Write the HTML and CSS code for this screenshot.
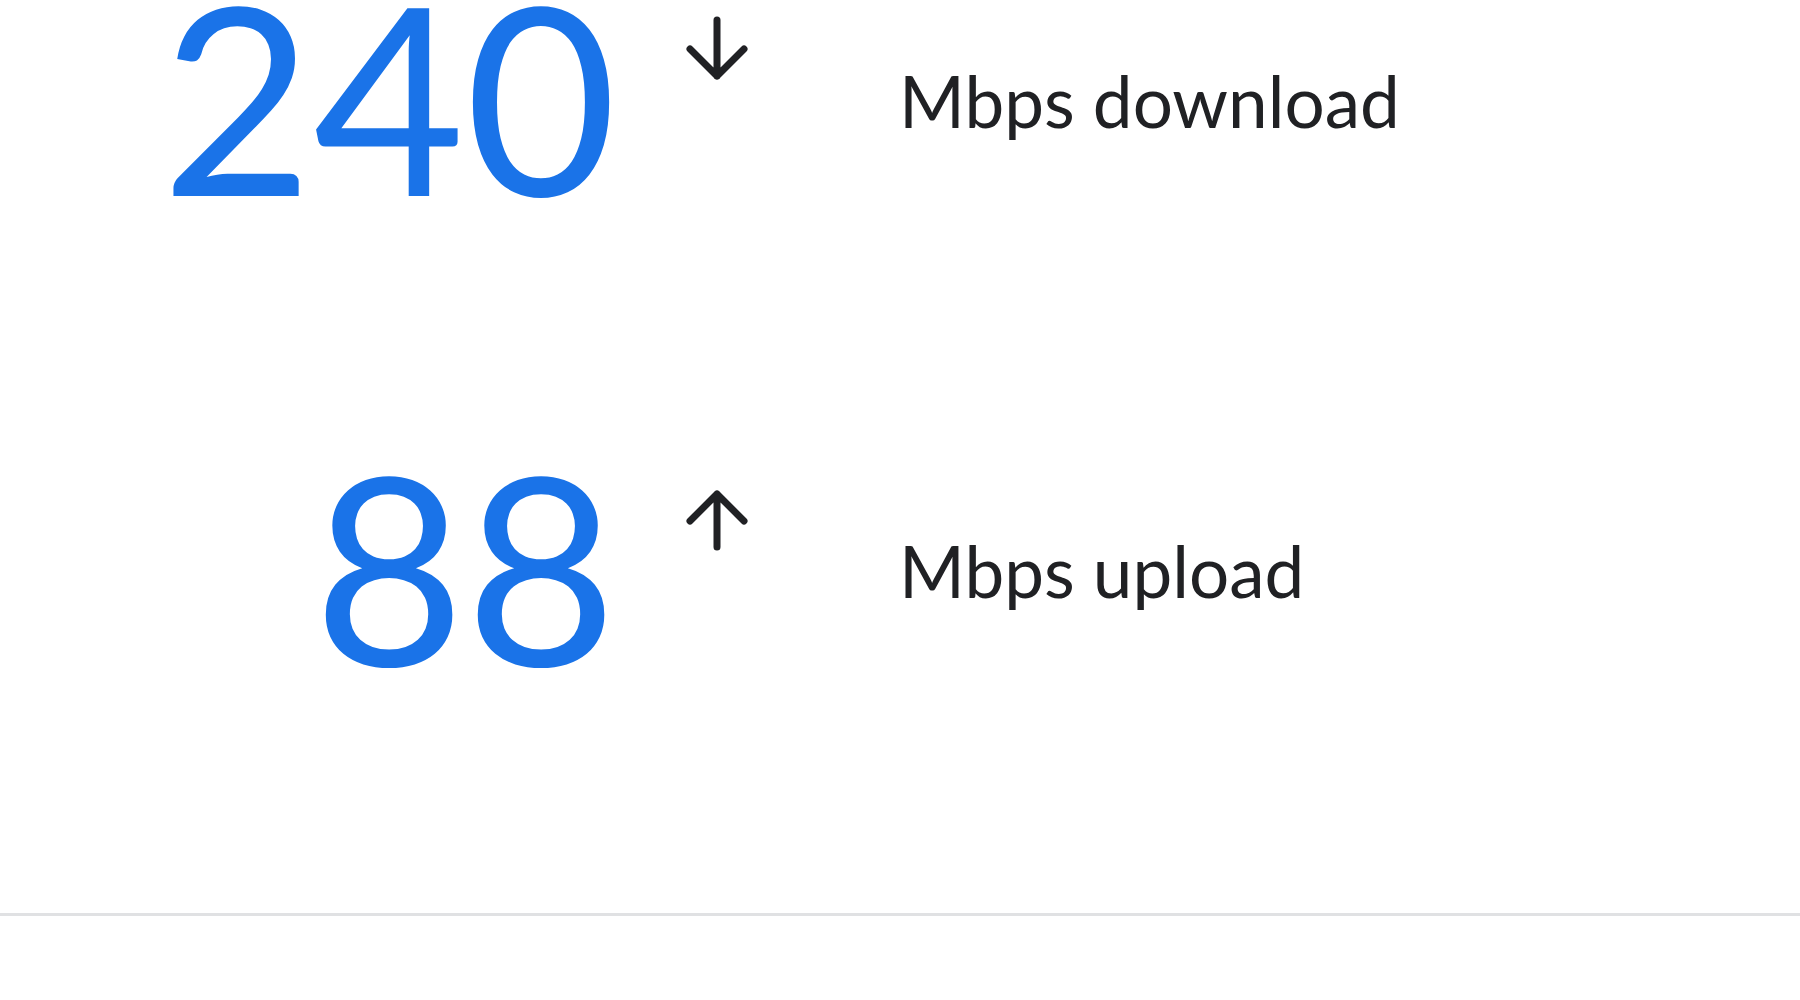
FILE: index.html
```html
<!DOCTYPE html>
<html lang="en">
<head>
<meta charset="utf-8">
<title>Speed test result</title>
<link rel="stylesheet" href="styles.css">
</head>
<body>
<main class="stats">
  <div class="row">
    <div class="num">240</div>
    <svg class="arrow" viewBox="0 0 66 70" width="66" height="70" aria-hidden="true">
      <path d="M33 8V64M6 37L33 64L60 37" />
    </svg>
    <div class="label">Mbps download</div>
  </div>
  <div class="row">
    <div class="num">88</div>
    <svg class="arrow" viewBox="0 0 66 70" width="66" height="70" aria-hidden="true">
      <path d="M33 65V12M6 39L33 12L60 39" />
    </svg>
    <div class="label">Mbps upload</div>
  </div>
</main>
<hr class="divider">
</body>
</html>
```
FILE: styles.css
```css
html, body {
  margin: 0;
  padding: 0;
  background: #ffffff;
}

body {
  font-family: Lato, "Noto Sans", Arial, sans-serif;
  color: #202124;
}

.stats {
  padding-top: 0;
}

.row {
  display: grid;
  grid-template-columns: 617px 282px 1fr;
  align-items: center;
  height: 190px;
}

.row + .row {
  margin-top: 280px;
}

.num {
  font-size: 262px;
  line-height: 190px;
  text-align: right;
  color: #1a73e8;
  font-weight: 400;
}

.arrow {
  align-self: start;
  margin-top: 12px;
  margin-left: 67px;
  fill: none;
  stroke: #202124;
  stroke-width: 7;
  stroke-linecap: round;
  stroke-linejoin: round;
}

.label {
  font-size: 71px;
  line-height: 1.2;
  padding-top: 11px;
  color: #202124;
}

.divider {
  margin: 253px 0 0;
  border: 0;
  height: 3px;
  background: #e0e1e3;
}
```
